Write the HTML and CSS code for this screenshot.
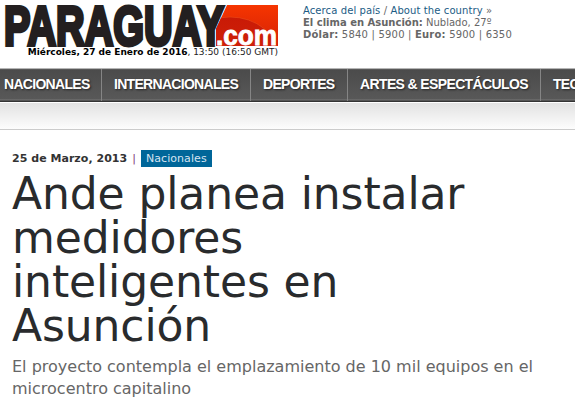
FILE: index.html
```html
<!DOCTYPE html>
<html lang="es">
<head>
<meta charset="utf-8">
<title>Paraguay.com</title>
<link rel="stylesheet" href="styles.css">
</head>
<body>
<header class="header">
  <div class="brand">
    <svg class="logo" width="275" height="43" viewBox="0 0 275 43" role="img" aria-label="Paraguay.com">
      <defs>
        <linearGradient id="red" x1="0" y1="0" x2="0" y2="1"><stop offset="0" stop-color="#f63500"/><stop offset="1" stop-color="#d52207"/></linearGradient>
        <linearGradient id="disc" x1="0" y1="0" x2="0" y2="1"><stop offset="0" stop-color="#c91a06"/><stop offset="1" stop-color="#d82b0c"/></linearGradient>
        <clipPath id="panel"><path d="M223 0H274V41H212V24Z"/></clipPath>
      </defs>
      <g clip-path="url(#panel)">
        <path fill="url(#red)" d="M212 0H274V41H212Z"/>
        <ellipse cx="226" cy="51" rx="48" ry="39" fill="url(#disc)" stroke="#ed4b1b" stroke-width=".6"/>
      </g>
      <text class="logo-name" transform="translate(0 40) scale(1 1.41)" textLength="220" lengthAdjust="spacingAndGlyphs">PARAGUAY</text>
      <text class="logo-tld" x="212" y="40" textLength="61" lengthAdjust="spacingAndGlyphs">.com</text>
    </svg>
    <div class="clock"><b>Miércoles, 27 de Enero de 2016</b>, 13:50 (16:50 GMT)</div>
  </div>
  <div class="info">
    <div class="about"><a>Acerca del país</a> / <a>About the country</a> »</div>
    <div class="weather"><b>El clima en Asunción:</b> Nublado, 27º</div>
    <div class="rates"><b>Dólar:</b> 5840 | 5900 | <b>Euro:</b> 5900 | 6350</div>
  </div>
</header>
<nav class="nav">
  <a class="n1">NACIONALES</a>
  <a class="n2">INTERNACIONALES</a>
  <a class="n3">DEPORTES</a>
  <a class="n4">ARTES &amp; ESPECTÁCULOS</a>
  <a class="n5">TECNOLOGÍA</a>
</nav>
<div class="subnav"></div>
<main class="article">
  <div class="meta"><b>25 de Marzo, 2013</b><span class="bar">|</span><a class="tag">Nacionales</a></div>
  <h1>Ande planea instalar medidores inteligentes en Asunción</h1>
  <p class="lead">El proyecto contempla el emplazamiento de 10 mil equipos en el microcentro capitalino</p>
</main>
</body>
</html>
```
FILE: styles.css
```css
* { box-sizing: border-box; }
body {
  margin: 0;
  background: #fff;
  font-family: "DejaVu Sans", Verdana, sans-serif;
  height: 401px;
  overflow: hidden;
}
.header { display: flex; height: 68px; }
.brand { width: 303px; padding: 5px 0 0 4px; }
.logo { display: block; overflow: visible; }
.logo-name {
  font: bold 40px "Liberation Sans", Arial, sans-serif;
  fill: #231f20;
  stroke: #231f20;
  stroke-width: 2.8;
}
.logo-tld {
  font: bold 28px "Liberation Sans", Arial, sans-serif;
  fill: #fff;
  stroke: #fff;
  stroke-width: .9;
}
.clock {
  width: 274px;
  margin-top: -1px;
  text-align: right;
  white-space: nowrap;
  font-size: 9px;
  line-height: 11px;
  color: #222;
}
.clock b { color: #000; }
.info {
  padding-top: 5px;
  font-size: 10px;
  line-height: 12px;
  color: #666;
  white-space: nowrap;
}
.info a { color: #1b5c85; }
.about { letter-spacing: .1px; }
.rates { letter-spacing: .2px; }
.nav {
  display: flex;
  height: 34px;
  border-top: 1px solid #b5b5b5;
  border-bottom: 1px solid #333;
  background: linear-gradient(#666 0, #4b4b4b 1px, #585858 30px, #777 31px, #333 32px);
  overflow: hidden;
}
.nav a {
  flex: none;
  padding-left: 12px;
  border-right: 1px solid #858585;
  color: #fff;
  font: bold 14px/31px "Liberation Sans", Arial, sans-serif;
  letter-spacing: -.7px;
  text-shadow: 1px 1px 2px #222;
  white-space: nowrap;
}
.nav .n1 { width: 102px; padding-left: 4px; }
.nav .n2 { width: 149px; }
.nav .n3 { width: 97px; }
.nav .n4 { width: 193px; letter-spacing: -.63px; }
.nav .n5 { width: 120px; }
.subnav {
  height: 28px;
  border-top: 1px solid #fff;
  border-bottom: 1px solid #ccc;
  background: linear-gradient(#e2e2e2, #fdfdfd);
}
.article { padding: 20px 12px 0; }
.meta {
  display: flex;
  height: 17px;
  font-size: 11px;
  line-height: 17px;
  color: #333;
}
.meta b { letter-spacing: .03px; }
.bar { margin: 0 5px 0 5px; color: #7d3b79; }
.tag { padding: 0 5px; background: #069; color: #d5e4f2; letter-spacing: .07px; }
h1 {
  width: 480px;
  margin: 5px 0 0;
  font-size: 44px;
  font-weight: 400;
  line-height: 44px;
  letter-spacing: -.11px;
  color: #292b2d;
}
.lead {
  width: 540px;
  margin: 8px 0 0;
  font-size: 16px;
  line-height: 22px;
  color: #666;
}
```
